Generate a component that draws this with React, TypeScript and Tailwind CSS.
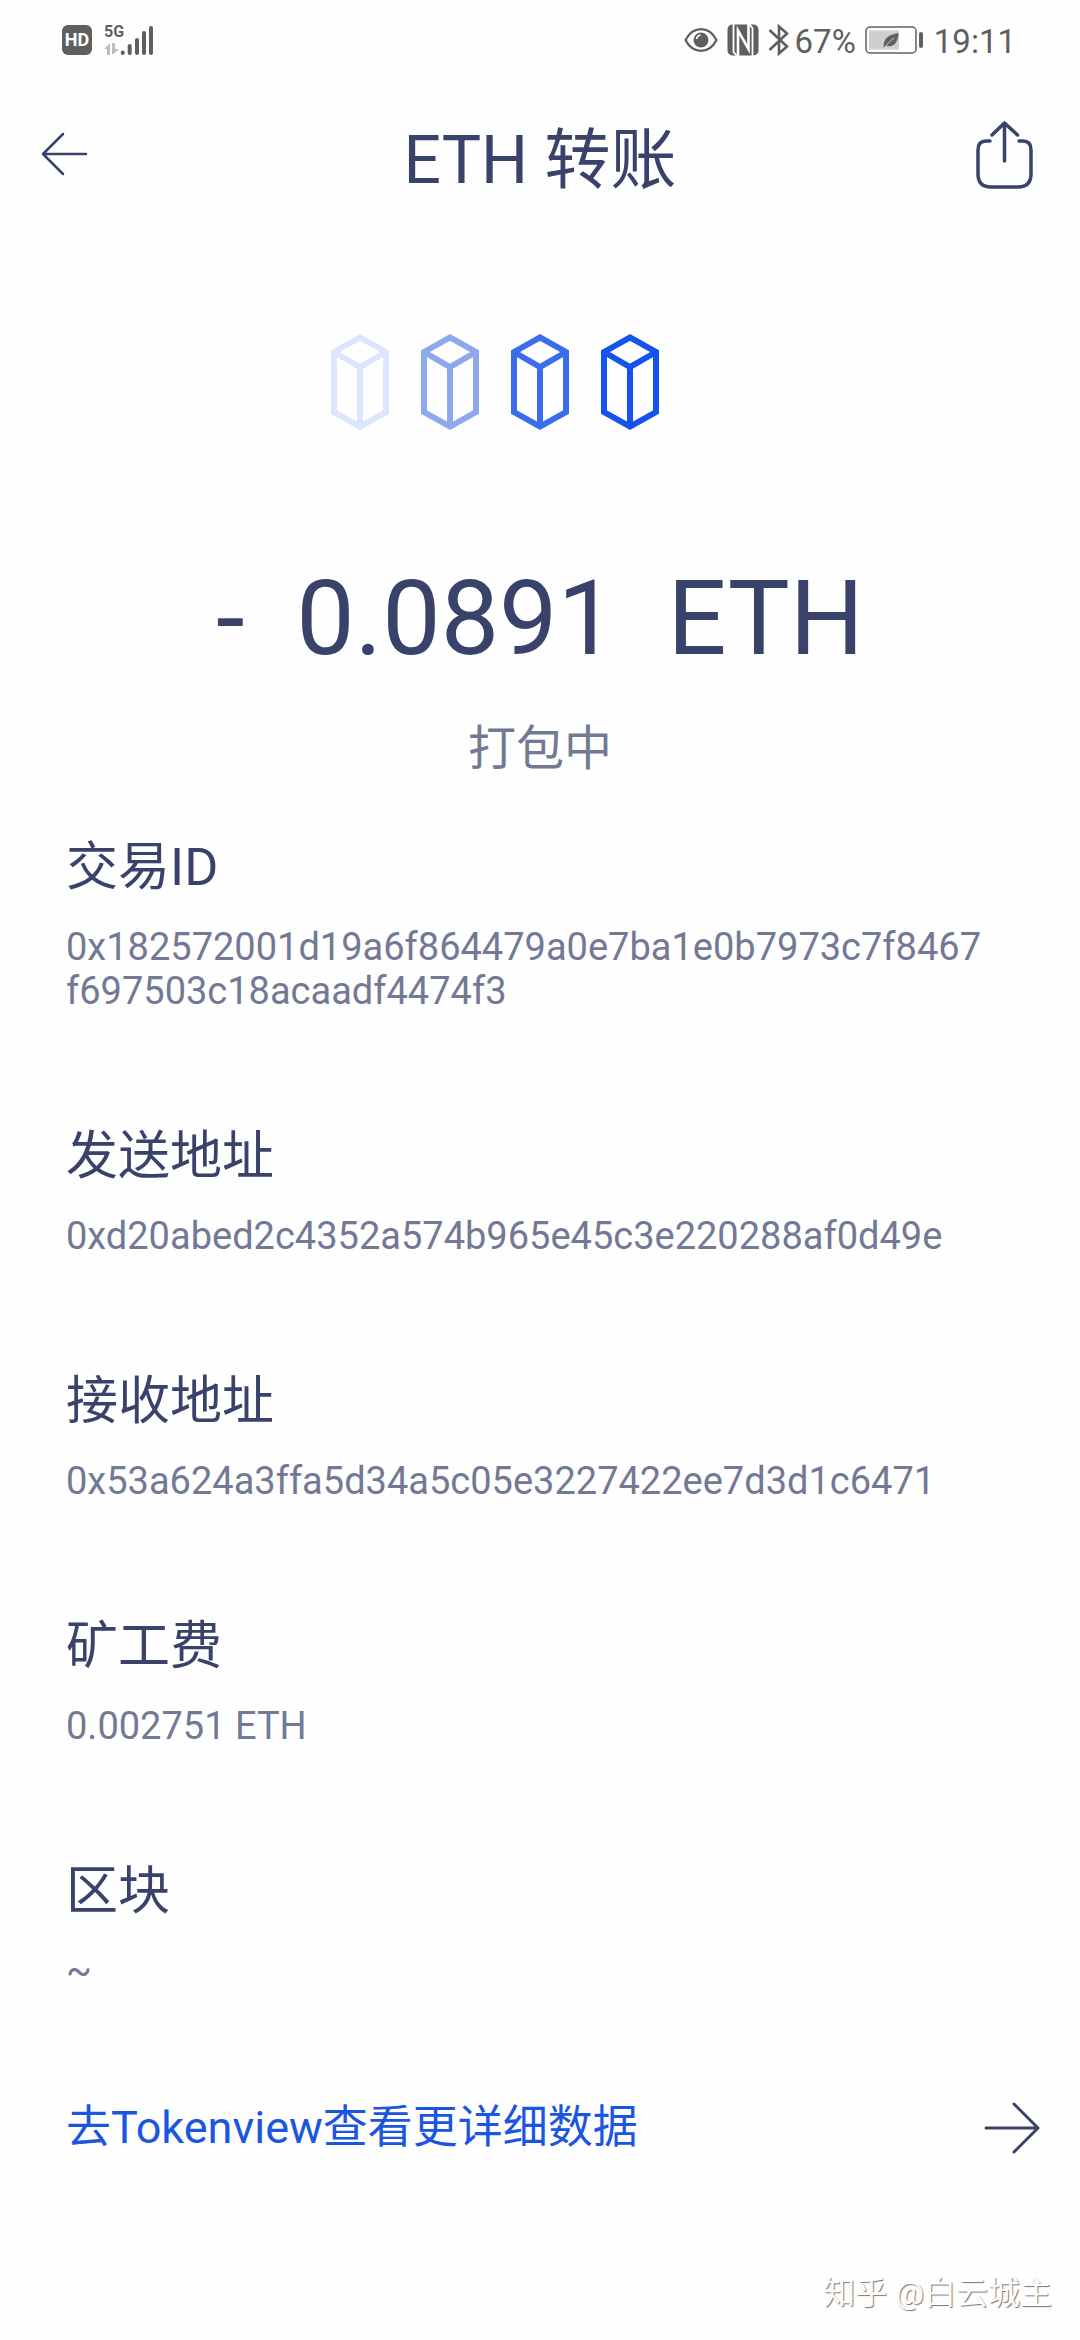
import type { ReactNode } from "react";

interface DetailProps {
  label: string;
  children: ReactNode;
}

const blocks = ["text-[#dbe5fb]", "text-[#8ea8ee]", "text-[#3b6ceb]", "text-[#1652ee]"];

function StatusBar() {
  return (
    <div className="flex h-20 items-center justify-between pl-[62px] pr-16 text-[#5f5f5f]">
      <div className="flex items-center gap-3">
        <span className="flex h-[30px] w-[30px] items-center justify-center rounded-md bg-[#5f5f5f] text-lg font-bold text-white">
          HD
        </span>
        <svg className="h-12 w-[52px]" viewBox="0 -8 52 48" aria-label="5G">
          <text x="0" y="13" fontSize="16" fontWeight="700" fill="currentColor">5G</text>
          <path d="M0 25l6-6v12H3v-6zM8 19h3v6h4l-7 6z" fill="#bdbdbd" />
          <g stroke="currentColor" strokeWidth="4" strokeLinecap="round">
            <path d="M18.700 28.500v.5M25.700 22v7M33 16v13M40 9v20M47 4v25" />
          </g>
        </svg>
      </div>
      <div className="flex items-center">
        <svg className="h-8 w-[34px]" viewBox="0 0 34 32">
          <path d="M1.500 16C9 1.500 25 1.500 32.500 16 25 30.500 9 30.500 1.500 16z" fill="none" stroke="currentColor" strokeWidth="2.300" />
          <circle cx="17" cy="16" r="7.500" fill="currentColor" />
          <path d="M12.500 15a5 5 0 0 1 4-4" fill="none" stroke="#fff" strokeWidth="1.500" />
        </svg>
        <svg className="ml-[9px] h-8 w-8" viewBox="0 0 32 32">
          <rect x=".5" y=".5" width="31" height="31" rx="5" fill="currentColor" />
          <path d="M6.500 0v28l3.500 4M25.500 32V4L22 0" fill="none" stroke="#fff" strokeWidth="1.800" />
          <path d="M11 32V6.500L21.500 25V0" fill="none" stroke="#fff" strokeWidth="2.600" />
        </svg>
        <svg className="ml-[9px] h-8 w-[22px]" viewBox="0 0 22 32" fill="none" stroke="currentColor" strokeWidth="2.600">
          <path d="M1.500 6L19 22.500 11 29.500V2.500l8 7L1.500 26" />
        </svg>
        <span className="ml-[5px] pt-1 text-[33px] leading-10">67%</span>
        <svg className="ml-[9px] h-8 w-[60px]" viewBox="0 0 60 32">
          <rect x="1" y="3" width="50" height="26" rx="4" fill="none" stroke="currentColor" strokeWidth="1.500" />
          <rect x="4" y="6.500" width="30" height="19" fill="#cfcfcf" />
          <path d="M18.500 24c0-11 5-13 15-15-.5 10-5 15-13 12.500zM17 27l4-7" fill="currentColor" />
          <path d="M19 25c3-5 6-8 10-11" stroke="#cfcfcf" fill="none" />
          <rect x="54" y="8" width="4" height="16" rx="2" fill="currentColor" />
        </svg>
        <span className="ml-[9px] pt-1 text-[33px] leading-10">19:11</span>
      </div>
    </div>
  );
}

function Header() {
  return (
    <header className="flex h-[148px] items-center justify-between pl-10 pr-11">
      <button type="button" aria-label="返回" className="flex w-[66px]">
        <svg className="h-12 w-12" viewBox="0 0 48 48" fill="none" stroke="currentColor" strokeWidth="2.500" strokeLinecap="round" strokeLinejoin="round">
          <path d="M23 4L3 24l20 20M3 24h43" />
        </svg>
      </button>
      <h1 className="pt-[14px] text-[66px] leading-[78px]">ETH 转账</h1>
      <button type="button" aria-label="分享">
        <svg className="h-[70px] w-[62px]" viewBox="0 0 62 70" fill="none" stroke="currentColor" strokeWidth="3.500" strokeLinecap="round" strokeLinejoin="round">
          <path d="M16 22h-4Q4 22 4 31v24Q4 68 17 68h27Q57 68 57 55V31q0-9-8-9h-4M30.500 42V4M18 16L30.500 4l13 12" />
        </svg>
      </button>
    </header>
  );
}

function Detail({ label, children }: DetailProps) {
  return (
    <section className="mb-[105px]">
      <h2 className="text-[52px] leading-[78px]">{label}</h2>
      <p className="mt-[18px] text-[38px] leading-[44px] break-all text-[#737994]">{children}</p>
    </section>
  );
}

export default function App() {
  return (
    <div className="min-h-screen bg-[#fefefe] font-['Roboto','Noto_Sans_CJK_SC',sans-serif] text-[#38426a]">
      <StatusBar />
      <Header />

      <main>
        {/* Packing progress */}
        <div className="mt-[106px] flex justify-center gap-8 pr-[90px]">
          {blocks.map((color) => (
            <svg key={color} className={`h-24 w-[58px] ${color}`} viewBox="0 0 58 96" fill="none" stroke="currentColor" strokeWidth="6">
              <path d="M3 18L29 3.500 55 18v60L29 92.500 3 78zM3 18l26 15 26-15M29 33v59" />
            </svg>
          ))}
        </div>

        <p className="mt-[125px] text-center text-[104px] leading-[128px] whitespace-pre">{"-  0.0891  ETH"}</p>
        <p className="mt-[30px] text-center text-[48px] leading-[72px] text-[#737994]">打包中</p>

        <div className="mt-11 pr-[90px] pl-[66px]">
          <Detail label="交易ID">0x182572001d19a6f864479a0e7ba1e0b7973c7f8467f697503c18acaadf4474f3</Detail>
          <Detail label="发送地址">0xd20abed2c4352a574b965e45c3e220288af0d49e</Detail>
          <Detail label="接收地址">0x53a624a3ffa5d34a5c05e3227422ee7d3d1c6471</Detail>
          <Detail label="矿工费">0.002751 ETH</Detail>
          <Detail label="区块">~</Detail>
        </div>

        <a href="#tokenview" className="flex items-center justify-between pr-10 pl-[66px] text-[45px] leading-[60px] text-[#1a56e0]">
          去Tokenview查看更详细数据
          <svg className="h-[52px] w-14 text-[#38426a]" viewBox="0 0 56 52" fill="none" stroke="currentColor" strokeWidth="3" strokeLinecap="round" strokeLinejoin="round">
            <path d="M2 26h52M30 2l24 24-24 24" />
          </svg>
        </a>
      </main>

      <footer className="mt-[111px] pr-7 text-right text-[32px] leading-[48px] text-[#fefefe] [text-shadow:1px_1px_1px_#777]">
        知乎 @白云城主
      </footer>
    </div>
  );
}
